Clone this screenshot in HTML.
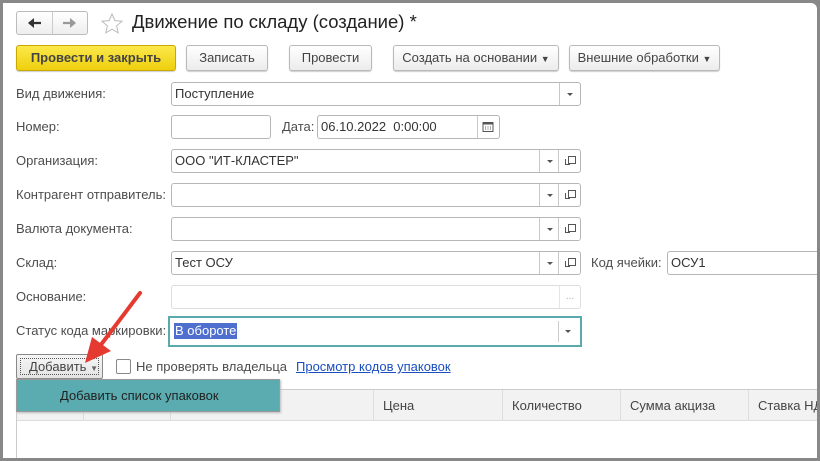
<!DOCTYPE html>
<html><head><meta charset="utf-8"><style>
*{box-sizing:border-box;margin:0;padding:0}
body{width:820px;height:461px;overflow:hidden;background:#888;font-family:"Liberation Sans",Arial,sans-serif;font-size:13px;color:#333;position:relative}
.frame{position:absolute;left:3px;top:3px;width:814px;height:455px;background:#fff;border-top-right-radius:6px;overflow:hidden}
.a{position:absolute}
.btn{position:absolute;height:26px;border:1px solid #b9b9b9;border-radius:3px;background:linear-gradient(#fff,#ececec);text-align:center;line-height:24px;color:#444;box-shadow:0 1px 1px #ccc}
.lbl{position:absolute;color:#4d4d4d;line-height:16px}
.in{position:absolute;height:24px;border:1px solid #b6b6b6;border-radius:3px;background:#fff;line-height:22px;padding-left:3px;color:#333}
.dd{position:absolute;top:0;bottom:0;width:20px;border-left:1px solid #c9c9c9}
.dd:after{content:"";position:absolute;left:7px;top:10px;border:3px solid transparent;border-top:3px solid #555}
.op{position:absolute;top:0;bottom:0;width:22px;border-left:1px solid #c9c9c9}
.op:before{content:"";position:absolute;left:9px;top:6px;width:6px;height:6px;border:1px solid #555}
.op:after{content:"";position:absolute;left:6px;top:9px;width:4px;height:5px;border-left:1px solid #555;border-bottom:1px solid #555}
.th{position:absolute;top:0;height:31px;border-right:1px solid #ddd;line-height:31px;padding-left:9px;color:#444}
</style></head><body>
<div class="frame">
<div class="a" style="left:13px;top:8px;width:72px;height:24px;border:1px solid #bbb;border-radius:3px;background:linear-gradient(#fff,#eee)"></div>
<div class="a" style="left:49px;top:9px;width:1px;height:22px;background:#ccc"></div>
<svg class="a" style="left:24px;top:13px" width="16" height="14" viewBox="0 0 16 14"><path d="M2 7H14" stroke="#333" stroke-width="2.2"/><path d="M1 7L7 2V12Z" fill="#333"/></svg>
<svg class="a" style="left:58px;top:13px" width="16" height="14" viewBox="0 0 16 14"><path d="M2 7H14" stroke="#999" stroke-width="2.2"/><path d="M15 7L9 2V12Z" fill="#999"/></svg>
<svg class="a" style="left:97px;top:9px" width="24" height="24" viewBox="0 0 24 24"><path d="M12 2l2.9 6.6 7.1.6-5.4 4.7 1.6 7-6.2-3.7-6.2 3.7 1.6-7L2 9.2l7.1-.6z" fill="none" stroke="#bbb"/></svg>
<div class="a" style="left:129px;top:8px;font-size:18.5px;color:#222">Движение по складу (создание) *</div>

<div class="btn" style="left:13px;top:42px;width:160px;background:linear-gradient(#fbe84a,#efcf0e);border-color:#c9a800;font-weight:bold;color:#444">Провести и закрыть</div>
<div class="btn" style="left:183px;top:42px;width:82px">Записать</div>
<div class="btn" style="left:286px;top:42px;width:83px">Провести</div>
<div class="btn" style="left:390px;top:42px;width:166px">Создать на основании <span style="font-size:9px">▼</span></div>
<div class="btn" style="left:566px;top:42px;width:151px">Внешние обработки <span style="font-size:9px">▼</span></div>

<div class="lbl" style="left:13px;top:83px">Вид движения:</div>
<div class="in" style="left:168px;top:79px;width:410px">Поступление<div class="dd" style="right:0;width:21px"></div></div>

<div class="lbl" style="left:13px;top:116px">Номер:</div>
<div class="in" style="left:168px;top:112px;width:100px"></div>
<div class="lbl" style="left:279px;top:116px">Дата:</div>
<div class="in" style="left:314px;top:112px;width:183px">06.10.2022 &nbsp;0:00:00<div class="a" style="right:0;top:0;bottom:0;width:22px;border-left:1px solid #c9c9c9"></div></div>
<svg class="a" style="left:479px;top:118px" width="12" height="11" viewBox="0 0 12 11"><rect x="1" y="1.5" width="10" height="9" fill="none" stroke="#555"/><rect x="1" y="1" width="10" height="2.5" fill="#555"/><path d="M3 6h1M5.5 6h1M8 6h1M3 8h1M5.5 8h1M8 8h1" stroke="#555"/></svg>

<div class="lbl" style="left:13px;top:150px">Организация:</div>
<div class="in" style="left:168px;top:146px;width:410px">ООО "ИТ-КЛАСТЕР"<div class="dd" style="right:21px"></div><div class="op" style="right:0"></div></div>
<div class="lbl" style="left:13px;top:184px">Контрагент отправитель:</div>
<div class="in" style="left:168px;top:180px;width:410px"><div class="dd" style="right:21px"></div><div class="op" style="right:0"></div></div>
<div class="lbl" style="left:13px;top:218px">Валюта документа:</div>
<div class="in" style="left:168px;top:214px;width:410px"><div class="dd" style="right:21px"></div><div class="op" style="right:0"></div></div>
<div class="lbl" style="left:13px;top:252px">Склад:</div>
<div class="in" style="left:168px;top:248px;width:410px">Тест ОСУ<div class="dd" style="right:21px"></div><div class="op" style="right:0"></div></div>
<div class="lbl" style="left:588px;top:252px">Код ячейки:</div>
<div class="in" style="left:664px;top:248px;width:160px">ОСУ1</div>

<div class="lbl" style="left:13px;top:286px">Основание:</div>
<div class="in" style="left:168px;top:282px;width:410px;border-color:#ddd"><div class="a" style="right:0;top:0;bottom:0;width:21px;border-left:1px solid #e5e5e5;color:#aaa;text-align:center;font-size:10px">...</div></div>

<div class="lbl" style="left:13px;top:320px">Статус кода маркировки:</div>
<div class="a" style="left:165px;top:313px;width:414px;height:31px;border:2px solid #5aa9ad;background:#fff"></div>
<div class="a" style="left:171px;top:320px;background:#4f6fcf;color:#fff;line-height:16px;padding:0 1px">В обороте</div>
<div class="a" style="left:555px;top:318px;width:1px;height:21px;background:#ccc"></div>
<div class="a" style="left:562px;top:327px;border:3px solid transparent;border-top:3px solid #555"></div>

<div class="a" style="left:13px;top:351px;width:87px;height:25px;border:1px solid #888;border-radius:2px;background:linear-gradient(#f6f6f6,#e4e4e4)"><div class="a" style="left:3px;top:3px;right:3px;bottom:3px;border:1px dotted #555"></div><div class="a" style="left:12px;top:4px;color:#444">Добавить <span style="font-size:8px;color:#666">▼</span></div></div>
<div class="a" style="left:113px;top:356px;width:15px;height:15px;border:1px solid #888;border-radius:2px;background:#fff"></div>
<div class="lbl" style="left:133px;top:356px">Не проверять владельца</div>
<div class="lbl" style="left:293px;top:356px;color:#1a4fc0;text-decoration:underline">Просмотр кодов упаковок</div>

<div class="a" style="left:13px;top:386px;width:808px;height:70px;border:1px solid #ccc;border-right:none">
<div class="a" style="left:0;top:0;right:0;height:31px;background:#f2f2f2;border-bottom:1px solid #ddd"></div>
<div class="th" style="left:0;width:67px"></div><div class="th" style="left:67px;width:87px"></div><div class="th" style="left:154px;width:203px"></div>
<div class="th" style="left:357px;width:129px">Цена</div><div class="th" style="left:486px;width:118px">Количество</div><div class="th" style="left:604px;width:128px">Сумма акциза</div><div class="th" style="left:732px;width:80px">Ставка НД</div>
</div>
<div class="a" style="left:13px;top:376px;width:264px;height:33px;background:#5aacb0;border:1px solid #999;box-shadow:1px 1px 2px #bbb;color:#222;line-height:31px;padding-left:43px">Добавить список упаковок</div>

<svg class="a" style="left:0;top:0" width="820" height="461"><path d="M137 290 L97 343" stroke="#e53a2f" stroke-width="4" stroke-linecap="round"/><path d="M82 360 L89 334 L108 348 Z" fill="#e53a2f"/></svg>
</div>
</body></html>
